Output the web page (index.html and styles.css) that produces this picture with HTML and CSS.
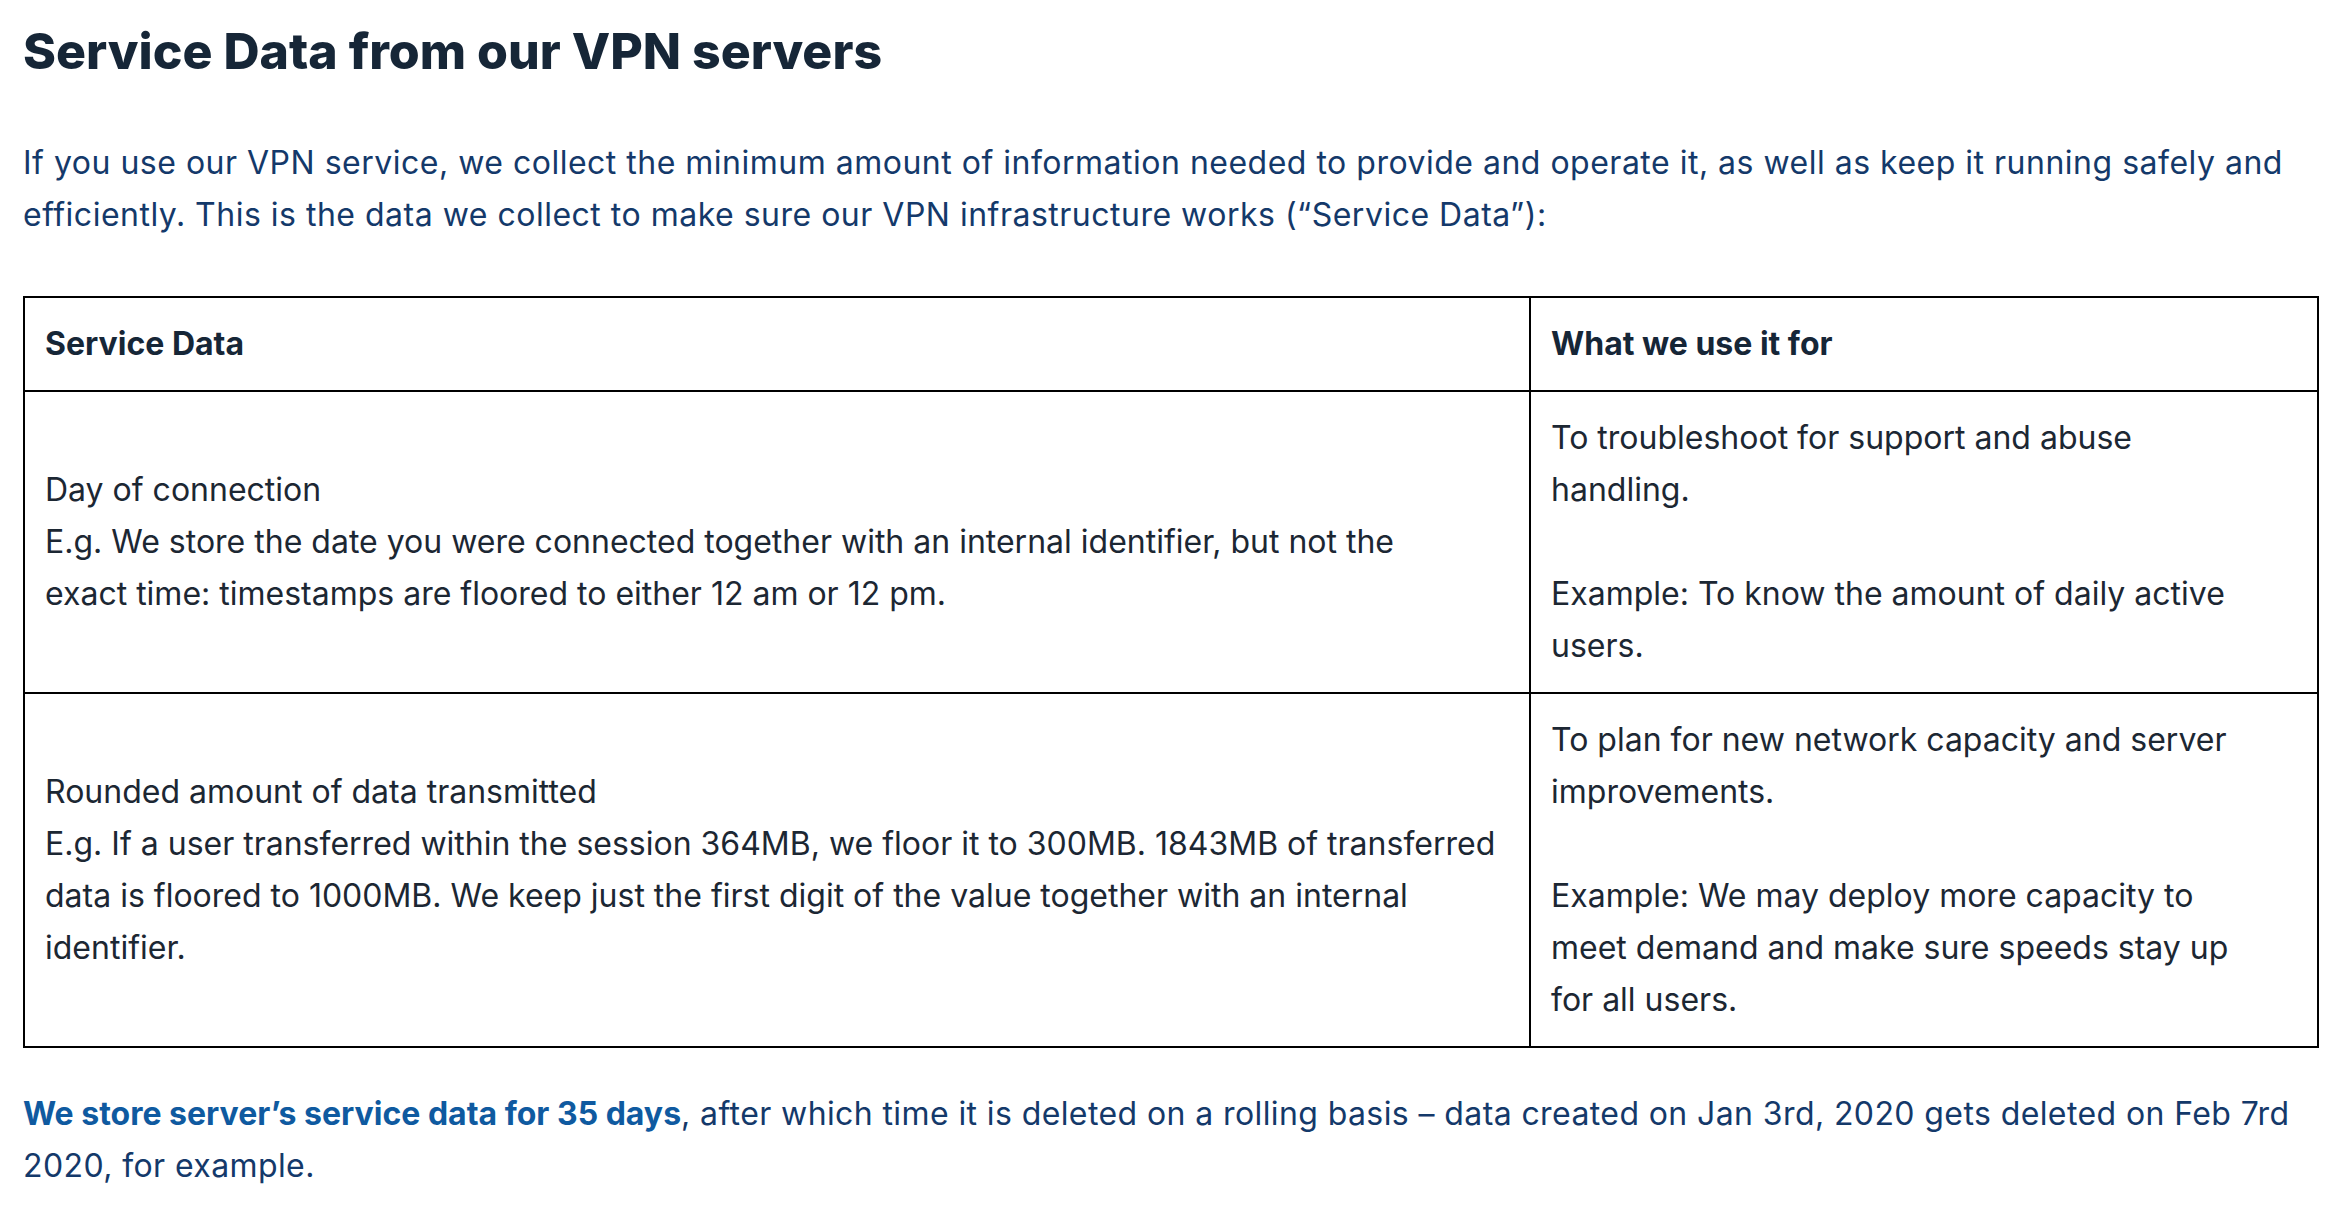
FILE: index.html
```html
<!DOCTYPE html>
<html lang="en">
<head>
<meta charset="utf-8">
<title>Service Data from our VPN servers</title>
<link rel="stylesheet" href="styles.css">
</head>
<body>
<main class="section">
  <h1 class="section-title">Service Data from our VPN servers</h1>
  <p class="lead">If you use our VPN service, we collect the minimum amount of information needed to provide and operate it, as well as keep it running safely and efficiently. This is the data we collect to make sure our VPN infrastructure works (“Service Data”):</p>
  <table class="data-table">
    <thead>
      <tr>
        <th class="col-data">Service Data</th>
        <th class="col-use">What we use it for</th>
      </tr>
    </thead>
    <tbody>
      <tr>
        <td class="cell-data">Day of connection<br>E.g. We store the date you were connected together with an internal identifier, but not the<br>exact time: timestamps are floored to either 12 am or 12 pm.</td>
        <td class="cell-use">To troubleshoot for support and abuse handling.<br><br>Example: To know the amount of daily active users.</td>
      </tr>
      <tr>
        <td class="cell-data">Rounded amount of data transmitted<br>E.g. If a user transferred within the session 364MB, we floor it to 300MB. 1843MB of transferred data is floored to 1000MB. We keep just the first digit of the value together with an internal identifier.</td>
        <td class="cell-use">To plan for new network capacity and server improvements.<br><br>Example: We may deploy more capacity to meet demand and make sure speeds stay up for all users.</td>
      </tr>
    </tbody>
  </table>
  <p class="note"><strong class="note-strong">We store server’s service data for 35 days</strong>, after which time it is deleted on a rolling basis – data created on Jan 3rd, 2020 gets deleted on Feb 7rd 2020, for example.</p>
</main>
</body>
</html>
```
FILE: styles.css
```css
html, body {
  margin: 0;
  background: #ffffff;
}

body {
  padding: 21px 23px 0 23px;
  font-family: "Inter", "Liberation Sans", sans-serif;
  font-size: 32px;
  line-height: 52px;
  font-weight: 400;
  color: #1c2733;
}

.section-title {
  margin: 0 0 56px 0;
  font-size: 50px;
  line-height: 60px;
  font-weight: 800;
  color: #162637;
}

.lead {
  margin: 0;
  color: #14396a;
  letter-spacing: 0.5px;
}

.data-table {
  width: 100%;
  margin-top: 55px;
  border-spacing: 0;
  table-layout: fixed;
  border-top: 2px solid #000;
  border-left: 2px solid #000;
}

.data-table th,
.data-table td {
  box-sizing: border-box;
  border-right: 2px solid #000;
  border-bottom: 2px solid #000;
  padding: 20px;
  text-align: left;
}

.data-table th {
  font-weight: 700;
  color: #162637;
  vertical-align: middle;
}

.col-data {
  width: 1506px;
}

.col-use,
.cell-use {
  padding-right: 58px !important;
}

.cell-data {
  vertical-align: middle;
}

.cell-use {
  vertical-align: top;
}

.note {
  margin: 40px 0 0 0;
  color: #14396a;
  letter-spacing: 0.4px;
}

.note-strong {
  font-weight: 700;
  color: #0f5aa0;
  letter-spacing: 0;
}
```
